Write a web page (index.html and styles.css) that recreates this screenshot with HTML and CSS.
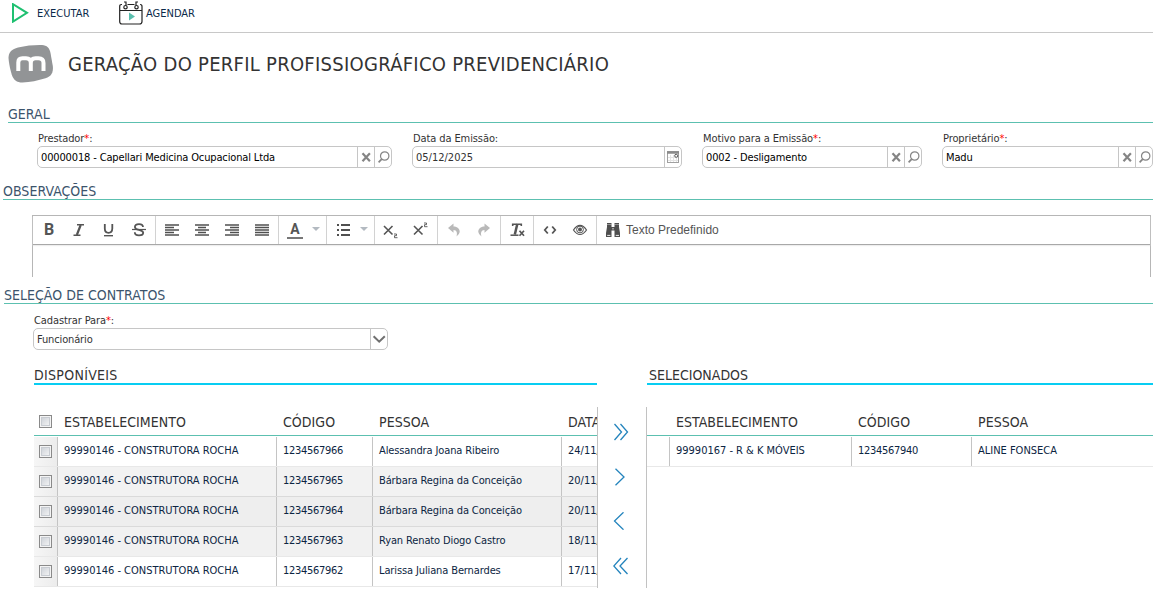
FILE: index.html
```html
<!DOCTYPE html>
<html lang="pt-BR">
<head>
<meta charset="utf-8">
<title>Geração do Perfil Profissiográfico Previdenciário</title>
<link rel="stylesheet" href="styles.css">
</head>
<body>
<svg class="defs" width="0" height="0">
  <symbol id="clear" viewBox="0 0 16 20"><path d="M4.5 6.2l7.4 8M11.9 6.2l-7.4 8" stroke="#858585" stroke-width="2.2"/></symbol>
  <symbol id="search" viewBox="0 0 16 20"><circle cx="9.7" cy="9" r="4.2" fill="none" stroke="#858585" stroke-width="1.2"/><path d="M6.7 12.2L3.6 15.4" stroke="#858585" stroke-width="1.7"/></symbol>
</svg>

<nav class="actions">
  <a class="action run"><svg width="18" height="20" viewBox="0 0 18 20"><path d="M2 1.200V18.600L16 9.800z" fill="none" stroke="#1fc071" stroke-width="2"/></svg><span>EXECUTAR</span></a>
  <a class="action schedule"><svg width="24" height="24" viewBox="0 0 24 24" fill="none" stroke="#222" stroke-width="1.2"><path d="M3 3.500H2.500Q.7 3.500.7 5.500V20.500Q.7 23 3 23H20.500Q23 23 23 20.500V5.500Q23 3.500 21 3.500M8.500 3.500H15.500M.7 9.500H23"/><circle cx="6.500" cy="6.200" r="1.700"/><circle cx="17.500" cy="6.200" r="1.700"/><path d="M7 4.500V1H5M17 4.500V1H19"/><path d="M10 11.500v8l6-4z" fill="#5bbfae" stroke="none"/></svg><span>AGENDAR</span></a>
</nav>

<header class="heading">
  <svg width="46" height="40" viewBox="0 0 46 40"><path d="M10 3.500C18 1.500 27 .8 34 1C39 1.200 41.500 4 42.500 9L44.800 22C45.600 29 43 32.500 37.500 34.200C30 36.500 22 38.300 14.500 38.500C8.500 38.500 5.500 36 3.700 30.500C2 25 .9 19 .5 14C.5 8 4 5 10 3.500Z" fill="#929496"/><path d="M10.300 27V18.500Q10.300 14.300 14.500 14.300H18Q22.800 14.300 22.800 19V27M22.800 19Q22.800 14.300 27.500 14.300H30.500Q35.500 14.300 35.500 19V27" fill="none" stroke="#fff" stroke-width="4"/></svg>
  <h1>GERAÇÃO DO PERFIL PROFISSIOGRÁFICO PREVIDENCIÁRIO</h1>
</header>

<section class="general">
  <h2 class="section-title">GERAL</h2>
  <div class="fields">
    <label class="field"><span class="label">Prestador<b>*</b>:</span>
      <span class="input"><span class="value strong">00000018 - Capellari Medicina Ocupacional Ltda</span><i class="tool"><svg width="16" height="20"><use href="#clear"/></svg></i><i class="tool"><svg width="16" height="20"><use href="#search"/></svg></i></span></label>
    <label class="field"><span class="label">Data da Emissão:</span>
      <span class="input"><span class="value date">05/12/2025</span><i class="tool"><svg width="16" height="20" viewBox="0 0 16 20"><rect x="2.500" y="4.500" width="11" height="11" fill="#fff" stroke="#a0a0a0"/><path d="M2 5.500H14" stroke="#8b8b8b" stroke-width="2.500"/><path d="M5.500 8v7M8.500 8v7M11.500 8v7M3 10.500h10M3 13.500h10" stroke="#e4e4e4"/><circle cx="11.200" cy="8.800" r="1.500" fill="#fff" stroke="#555"/></svg></i></span></label>
    <label class="field"><span class="label">Motivo para a Emissão<b>*</b>:</span>
      <span class="input"><span class="value strong">0002 - Desligamento</span><i class="tool"><svg width="16" height="20"><use href="#clear"/></svg></i><i class="tool"><svg width="16" height="20"><use href="#search"/></svg></i></span></label>
    <label class="field"><span class="label">Proprietário<b>*</b>:</span>
      <span class="input"><span class="value strong">Madu</span><i class="tool"><svg width="16" height="20"><use href="#clear"/></svg></i><i class="tool"><svg width="16" height="20"><use href="#search"/></svg></i></span></label>
  </div>
</section>

<section class="notes">
  <h2 class="section-title">OBSERVAÇÕES</h2>
  <div class="editor">
    <div class="editor-bar">
      <div class="group">
        <span class="btn bold">B</span>
        <span class="btn"><svg width="30" height="28" viewBox="0 0 30 28" stroke="#555" fill="none"><path d="M13 8.700H20M9.500 19.300H16.500" stroke-width="1.400"/><path d="M16.700 9L12.800 19" stroke-width="2.200"/></svg></span>
        <span class="btn"><svg width="30" height="28" viewBox="0 0 30 28" stroke="#555" fill="none"><path d="M10.800 8V12.500Q10.800 16.800 14.500 16.800T18.300 12.500V8" stroke-width="1.800"/><path d="M10 19.700H19" stroke-width="1.400"/></svg></span>
        <span class="btn"><svg width="30" height="28" viewBox="0 0 30 28" stroke="#555" fill="none"><path d="M19 11C19 8.200 16.800 8.100 15 8.100C12.700 8.100 10.900 9.200 10.900 11Q10.900 13 15 13.900T19.200 16.800C19.200 18.600 17 19.400 15 19.400C12.500 19.400 10.800 18.200 10.800 16.300" stroke-width="1.800"/><path d="M8 13.500H22" stroke-width="1.200"/></svg></span>
      </div>
      <div class="group">
        <span class="btn"><svg width="30" height="28" viewBox="0 0 30 28" stroke="#505050" stroke-width="1.700"><path d="M8 9h14M8 11.500h9M8 14h14M8 16.500h9M8 19h14"/></svg></span>
        <span class="btn"><svg width="30" height="28" viewBox="0 0 30 28" stroke="#505050" stroke-width="1.700"><path d="M8 9h14M11 11.500h8M8 14h14M11 16.500h8M8 19h14"/></svg></span>
        <span class="btn"><svg width="30" height="28" viewBox="0 0 30 28" stroke="#505050" stroke-width="1.700"><path d="M8 9h14M13 11.500h9M8 14h14M13 16.500h9M8 19h14"/></svg></span>
        <span class="btn"><svg width="30" height="28" viewBox="0 0 30 28" stroke="#505050" stroke-width="1.700"><path d="M8 9h14M8 11.500h14M8 14h14M8 16.500h14M8 19h14"/></svg></span>
      </div>
      <div class="group">
        <span class="btn color"><span>A</span></span><i class="caret"></i>
      </div>
      <div class="group">
        <span class="btn"><svg width="30" height="28" viewBox="0 0 30 28" stroke="#505050" stroke-width="1.800"><path d="M9 9h2M13 9h9M9 14h2M13 14h9M9 19h2M13 19h9"/></svg></span><i class="caret"></i>
      </div>
      <div class="group">
        <span class="btn"><svg width="30" height="28" viewBox="0 0 30 28" fill="none" stroke="#555"><path d="M8 10l8.500 8.500M16.500 10l-8.500 8.500" stroke-width="1.600"/><path d="M18 18h2.500v1.700H18.500v2h3" stroke-width=".9"/></svg></span>
        <span class="btn"><svg width="30" height="28" viewBox="0 0 30 28" fill="none" stroke="#555"><path d="M8 10l8.500 8.500M16.500 10l-8.500 8.500" stroke-width="1.600"/><path d="M18 7h2.500v1.700H18.500v2h3" stroke-width=".9"/></svg></span>
      </div>
      <div class="group">
        <span class="btn"><svg width="30" height="28" viewBox="0 0 30 28" fill="#b9b9b9"><path d="M9 12l5.500-4.500V10.500C18.500 10.500 21 13 20.700 16Q20.400 18.500 17.500 20.500C18.500 17 18 14 14.500 14V16.700Z"/></svg></span>
        <span class="btn"><svg width="30" height="28" viewBox="0 0 30 28" fill="#b9b9b9"><path d="M21 12l-5.500-4.500V10.500C11.500 10.500 9 13 9.300 16Q9.600 18.500 12.500 20.500C11.500 17 12 14 15.500 14V16.700Z"/></svg></span>
      </div>
      <div class="group">
        <span class="btn"><svg width="30" height="28" viewBox="0 0 30 28" fill="none" stroke="#555"><path d="M10.500 8.200H19.500M10.700 7.500v2.500M19.300 7.500v2.500" stroke-width="1.600"/><path d="M15.300 8L12.800 18.500" stroke-width="2.500"/><path d="M8.500 19.200H16.500" stroke-width="1.500"/><path d="M17.500 14.800l4.500 5M22 14.800l-4.500 5" stroke-width="1.700"/></svg></span>
      </div>
      <div class="group">
        <span class="btn"><svg width="30" height="28" viewBox="0 0 30 28" fill="none" stroke="#555" stroke-width="1.800"><path d="M12.800 10.500L9.800 14L12.800 17.500M17.200 10.500L20.200 14L17.200 17.500"/></svg></span>
        <span class="btn"><svg width="30" height="28" viewBox="0 0 30 28" fill="none" stroke="#555" stroke-width="1.200"><path d="M8.500 14Q11.500 9.300 15 9.300T21.500 14Q18.500 18.500 15 18.500T8.500 14Z"/><circle cx="15" cy="13.500" r="3.400" stroke-width="1"/><circle cx="15" cy="13.500" r="2" fill="#555" stroke="none"/></svg></span>
      </div>
      <div class="predefined">
        <svg width="14" height="14" viewBox="0 0 14 14" fill="#4e4e4e"><path d="M1 0H5.500V4H8.500V0H13V4L14 10V14H8.500V7.500H5.500V14H0V10L1 4Z"/><path d="M1.200 12.400h3.200M9.800 12.400h3.200M7 5v1.500" stroke="#fff" stroke-width=".9"/><path d="M1 1.500H5.500M8.500 1.500H13" stroke="#fff" stroke-width=".4"/></svg>
        <span>Texto Predefinido</span>
      </div>
    </div>
  </div>
</section>

<section class="contracts">
  <h2 class="section-title">SELEÇÃO DE CONTRATOS</h2>
  <label class="field register"><span class="label">Cadastrar Para<b>*</b>:</span>
    <span class="input"><span class="value">Funcionário</span><i class="tool"><svg width="16" height="20" viewBox="0 0 16 20"><path d="M2.600 7.200L8.200 12.700L13.800 7.200" fill="none" stroke="#707070" stroke-width="2"/></svg></i></span></label>

  <div class="transfer">
    <div class="pane available">
      <h3>DISPONÍVEIS</h3>
      <div class="table">
        <div class="row head"><span class="check"><i class="box"></i></span><span>ESTABELECIMENTO</span><span>CÓDIGO</span><span>PESSOA</span><span>DATA</span></div>
        <div class="row"><span class="check"><i class="box"></i></span><span>99990146 - CONSTRUTORA ROCHA</span><span class="code">1234567966</span><span class="person">Alessandra Joana Ribeiro</span><span>24/11/</span></div>
        <div class="row shade"><span class="check"><i class="box"></i></span><span>99990146 - CONSTRUTORA ROCHA</span><span class="code">1234567965</span><span class="person">Bárbara Regina da Conceição</span><span>20/11/</span></div>
        <div class="row shade deep"><span class="check"><i class="box"></i></span><span>99990146 - CONSTRUTORA ROCHA</span><span class="code">1234567964</span><span class="person">Bárbara Regina da Conceição</span><span>20/11/</span></div>
        <div class="row shade soft"><span class="check"><i class="box"></i></span><span>99990146 - CONSTRUTORA ROCHA</span><span class="code">1234567963</span><span class="person">Ryan Renato Diogo Castro</span><span>18/11/</span></div>
        <div class="row"><span class="check"><i class="box"></i></span><span>99990146 - CONSTRUTORA ROCHA</span><span class="code">1234567962</span><span class="person">Larissa Juliana Bernardes</span><span>17/11/</span></div>
      </div>
    </div>
    <div class="arrows">
      <svg width="18" height="18" viewBox="0 0 18 18"><path d="M1.500 1l7 8-7 8M7.500 1l7 8-7 8"/></svg>
      <svg width="18" height="18" viewBox="0 0 18 18"><path d="M2.500 .8l8.500 8.200-8.500 8.200"/></svg>
      <svg width="18" height="18" viewBox="0 0 18 18"><path d="M10.500 .3l-9 8.700 9 8.700"/></svg>
      <svg width="18" height="18" viewBox="0 0 18 18"><path d="M8 1L.8 9 8 17M14.500 1L7 9 14.500 17"/></svg>
    </div>
    <div class="pane selected">
      <h3>SELECIONADOS</h3>
      <div class="table">
        <div class="row head"><span></span><span>ESTABELECIMENTO</span><span>CÓDIGO</span><span>PESSOA</span></div>
        <div class="row"><span></span><span>99990167 - R &amp; K MÓVEIS</span><span class="code">1234567940</span><span>ALINE FONSECA</span></div>
      </div>
    </div>
  </div>
</section>
</body>
</html>
```

FILE: styles.css
```css
* { box-sizing: border-box; }
body {
  margin: 0;
  width: 1153px;
  height: 591px;
  overflow: hidden;
  background: #fff;
  color: #333;
  font: 11px/13px "DejaVu Sans Condensed", "DejaVu Sans", sans-serif;
  font-stretch: condensed;
  letter-spacing: -0.14px;
  white-space: nowrap;
}
svg { display: block; flex: none; }
.defs { position: absolute; }
h1, h2, h3 { margin: 0; font-weight: 400; }

.actions {
  display: flex;
  height: 33px;
  padding: 0 0 6px 11px;
  border-bottom: 1px solid #c8c8c8;
  letter-spacing: 0;
  color: #0b2a4a;
}
.action { display: flex; align-items: center; height: 26px; }
.run { width: 108px; gap: 8px; }
.schedule { gap: 3px; }

.heading {
  display: flex;
  align-items: center;
  gap: 14px;
  height: 62px;
  margin-bottom: 11px;
  padding-left: 8px;
}
.heading h1 { font-size: 20px; line-height: 24px; letter-spacing: 0.27px; color: #333; }

.section-title {
  height: 17px;
  border-bottom: 1px solid #5cc0b0;
  font-size: 14px;
  line-height: 16px;
  letter-spacing: 0.03px;
  color: #3c546c;
}
.general .section-title { margin-left: 8px; }
.notes .section-title { margin-left: 3px; }
.contracts .section-title { margin-left: 4px; }

.fields {
  display: grid;
  grid-template-columns: 355px 270px 220px 211px;
  gap: 20px;
  padding: 9px 0 0 37px;
}
.field { display: block; }
.label { display: block; height: 14px; padding-left: 1px; letter-spacing: -0.1px; }
.label b { font-weight: 400; color: #f00; }
.input {
  display: flex;
  height: 22px;
  border: 1px solid #c6c6c6;
  border-radius: 5px;
}
.value { flex: 1; padding-left: 3px; line-height: 21px; }
.date { letter-spacing: 0; }
.strong { color: #000; }
.tool { border-left: 1px solid #c6c6c6; }

.notes { margin-top: 15px; }
.editor {
  width: 1119px;
  height: 62px;
  margin: 15px 0 0 32px;
  border: 1px solid #b6b6b6;
  border-bottom: 0;
}
.editor-bar {
  display: flex;
  height: 29px;
  border-bottom: 1px solid #a8a8a8;
  box-shadow: 0 1px 1px #eee;
}
.group { display: flex; padding: 0 1px; border-right: 1px solid #d2d2d2; }
.btn { width: 30px; height: 28px; }
.bold { font: 700 16px/28px Roboto, sans-serif; text-align: center; color: #555; }
.color { display: flex; justify-content: center; }
.color span {
  width: 16px;
  height: 23px;
  border-bottom: 2px solid #777;
  font: 700 14px/27px Roboto, sans-serif;
  text-align: center;
  color: #555;
}
.caret {
  width: 8px;
  height: 4px;
  margin: 11px 5px 0 2px;
  background: #b3bac1;
  clip-path: polygon(0 0, 100% 0, 50% 100%);
}
.predefined {
  display: flex;
  align-items: center;
  gap: 6px;
  padding-left: 9px;
  font: 12px/28px "Liberation Sans", Arial, sans-serif;
  letter-spacing: 0;
  color: #555;
}

.contracts { margin-top: 10px; }
.register { width: 355px; margin: 10px 0 0 33px; }

.transfer {
  display: grid;
  grid-template-columns: 564px 48px 507px;
  margin: 17px 0 0 34px;
}
.pane h3 {
  height: 18px;
  margin-bottom: 22px;
  border-bottom: 2px solid #08cdf2;
  font-size: 14px;
  line-height: 16px;
  letter-spacing: 0;
}
.available h3 { margin-right: 1px; letter-spacing: 0.3px; }
.selected h3 { margin-left: 1px; padding-left: 2px; }
.table { height: 181px; overflow: hidden; }
.available .table { border-right: 1px solid #c2c2c2; }
.selected .table { border-left: 1px solid #c2c2c2; }
.row {
  display: grid;
  height: 30px;
  border-bottom: 1px solid #e8e8e8;
  line-height: 27px;
  letter-spacing: -0.01px;
  color: #0c2542;
}
.code { letter-spacing: -0.3px; }
.person { letter-spacing: -0.12px; }
.available .row { grid-template-columns: 24px 219px 96px 189px 36px; }
.selected .row { grid-template-columns: 23px 182px 120px 1fr; }
.row > span { padding-left: 6px; border-right: 1px solid #c4c4c4; overflow: hidden; }
.row > span:last-child { border-right: 0; }
.row.head {
  height: 29px;
  margin-bottom: 1px;
  padding-top: 1px;
  border-color: #5cc0b0;
  font-size: 14px;
  line-height: 28px;
  letter-spacing: 0.05px;
  color: #333;
}
.row.head > span { border-color: transparent; }
.row.shade { background: #f2f2f2; border-color: #dadada; }
.row.deep { background: #eee; }
.row.soft { background: #f1f1f1; border-color: #e8e8e8; }
.row > .check { padding: 8px 0 0 5px; background: linear-gradient(90deg, #f6f6f6, #ececec); }
.row.head > .check { padding-top: 7px; background: none; }
.box {
  display: block;
  width: 13px;
  height: 13px;
  border: 1px solid #8a8a8a;
  background: linear-gradient(135deg, #c6cbd2, #fafafa);
  box-shadow: inset 0 0 0 1px #f4f4f4, inset 0 0 0 2px #c8ccd2;
}
.arrows { display: flex; flex-direction: column; gap: 26.5px; padding: 56px 0 0 15px; }
.arrows svg { fill: none; stroke: #2484bd; stroke-width: 1.3; }
```
